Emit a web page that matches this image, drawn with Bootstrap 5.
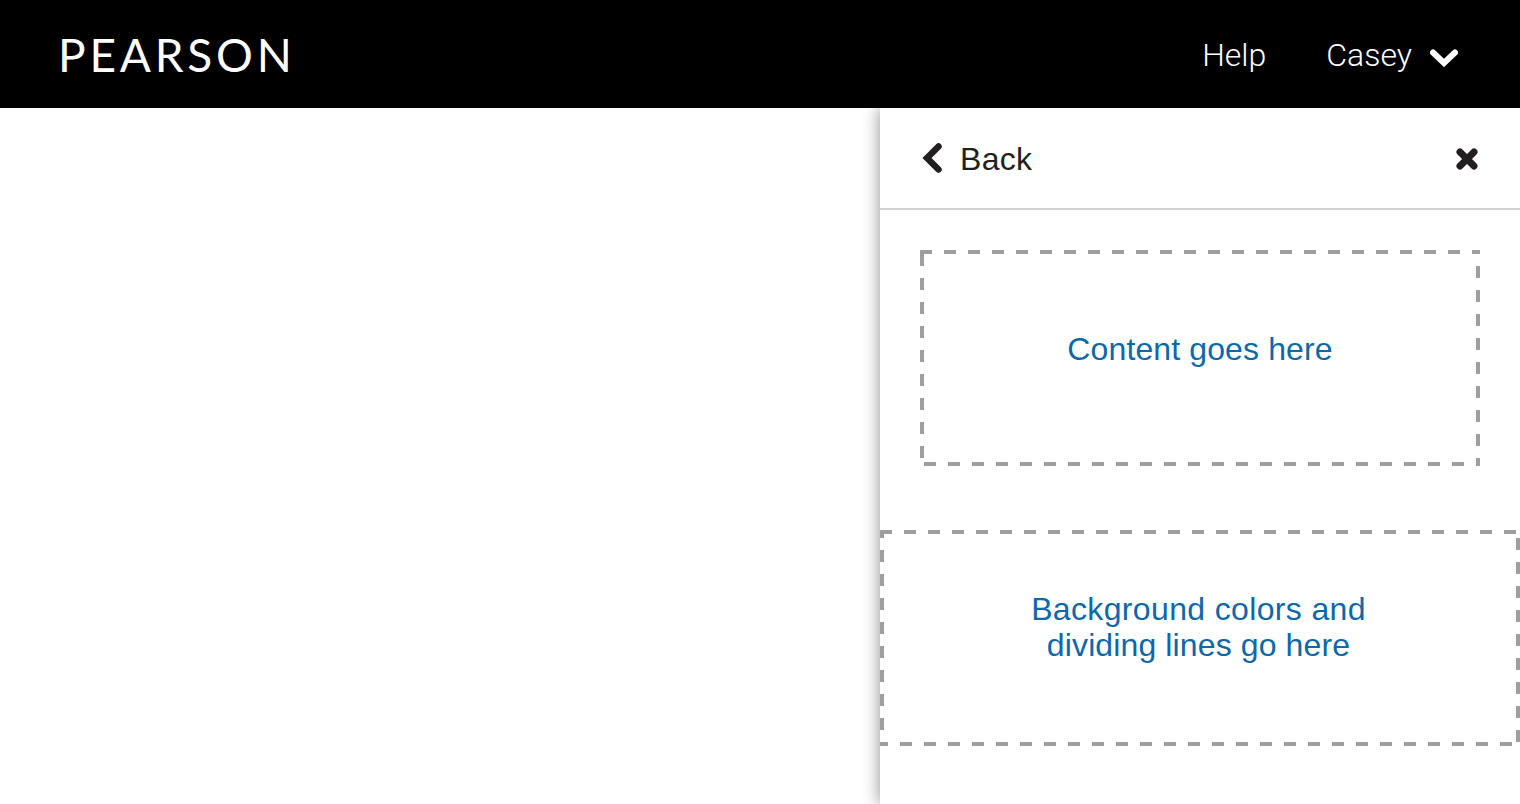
<!DOCTYPE html>
<html lang="en">

<head>
    <meta charset="UTF-8">
    <meta name="viewport" content="width=device-width, initial-scale=1.0">
    <title>Pearson</title>

    <link href="https://cdn.jsdelivr.net/npm/bootstrap@5.3.0/dist/css/bootstrap.min.css" rel="stylesheet">
    <style>
        body {
            font-family: "Liberation Sans", Arial, sans-serif;
            background: #fff;
            height: 804px;
            overflow: hidden;
        }

        .top-bar {
            height: 108px;
            background: #000;
            padding: 0 62px 0 58px;
            position: relative;
            z-index: 2;
        }

        .brand-name {
            font-family: Lato, sans-serif;
            font-weight: 400;
            font-size: 46px;
            line-height: 1;
            letter-spacing: 3.8px;
            color: #fff;
            padding-top: 2px;
        }

        .top-links {
            gap: 60px;
        }

        .top-link {
            font-family: Roboto, sans-serif;
            font-weight: 300;
            font-size: 32px;
            color: #fff;
            text-decoration: none;
            padding-top: 2px;
        }

        .user-link {
            gap: 18px;
        }

        .user-link svg {
            margin-top: 5px;
        }

        .side-panel {
            width: 640px;
            height: 696px;
            box-shadow: 0 0 16px rgba(0, 0, 0, .45);
            background: #fff;
        }

        .panel-head {
            height: 102px;
            padding: 0 41px 0 42px;
            border-bottom: 2px solid #d0d0d0;
            color: #231f20;
            font-size: 32px;
        }

        .back-link {
            gap: 18px;
        }

        .back-link span {
            padding-top: 2px;
            letter-spacing: .3px;
        }

        .close-icon {
            margin-top: 2px;
        }

        .dash-box {
            height: 216px;
            color: #0d68aa;
            font-size: 32px;
            line-height: 36px;
            text-align: center;
            background-color: #fff;
            background-image:
                linear-gradient(90deg, #9e9e9e 12px, transparent 12px),
                linear-gradient(90deg, #9e9e9e 12px, transparent 12px),
                linear-gradient(#9e9e9e 12px, transparent 12px),
                linear-gradient(#9e9e9e 12px, transparent 12px);
            background-size: 24px 4px, 24px 4px, 4px 24px, 4px 24px;
            background-repeat: repeat-x, repeat-x, repeat-y, repeat-y;
        }

        .box-inner {
            margin: 40px 40px 64px;
            padding-bottom: 18px;
            letter-spacing: .12px;
            background-position: 0 0, 4px 100%, 0 4px, 100% 16px;
        }

        .box-wide {
            padding: 0 3px 22px 0;
            background-position: 0 0, 20px 100%, 0 -4px, 100% 8px;
        }

        .line-one {
            letter-spacing: .35px;
        }

        .line-two {
            letter-spacing: .12px;
        }
    </style>
</head>

<body>
    <nav class="top-bar d-flex align-items-center justify-content-between">
        <div class="brand-name">PEARSON</div>
        <div class="top-links d-flex align-items-center">
            <a class="top-link" href="#">Help</a>
            <a class="top-link user-link d-flex align-items-center" href="#">Casey
                <svg width="28" height="18" viewBox="0 0 28 18"><path d="M3 3.5L14 14 25 3.5" fill="none" stroke="#fff" stroke-width="6" stroke-linecap="round"/></svg>
            </a>
        </div>
    </nav>
    <div class="d-flex justify-content-end">
        <aside class="side-panel">
            <div class="panel-head d-flex align-items-center justify-content-between">
                <div class="back-link d-flex align-items-center">
                    <svg width="20" height="30" viewBox="0 0 20 30"><path d="M16.5 3.5L5 15l11.5 11.5" fill="none" stroke="#231f20" stroke-width="6.5" stroke-linecap="round"/></svg>
                    <span>Back</span>
                </div>
                <svg class="close-icon" width="24" height="24" viewBox="0 0 24 24"><path d="M5 5l14 14M19 5L5 19" fill="none" stroke="#231f20" stroke-width="7" stroke-linecap="round"/></svg>
            </div>
            <div class="dash-box box-inner d-flex align-items-center justify-content-center">Content goes here</div>
            <div class="dash-box box-wide d-flex flex-column align-items-center justify-content-center">
                <span class="line-one">Background colors and</span>
                <span class="line-two">dividing lines go here</span>
            </div>
        </aside>
    </div>
    <script src="https://cdn.jsdelivr.net/npm/bootstrap@5.3.0/dist/js/bootstrap.bundle.min.js"></script>
</body>

</html>
